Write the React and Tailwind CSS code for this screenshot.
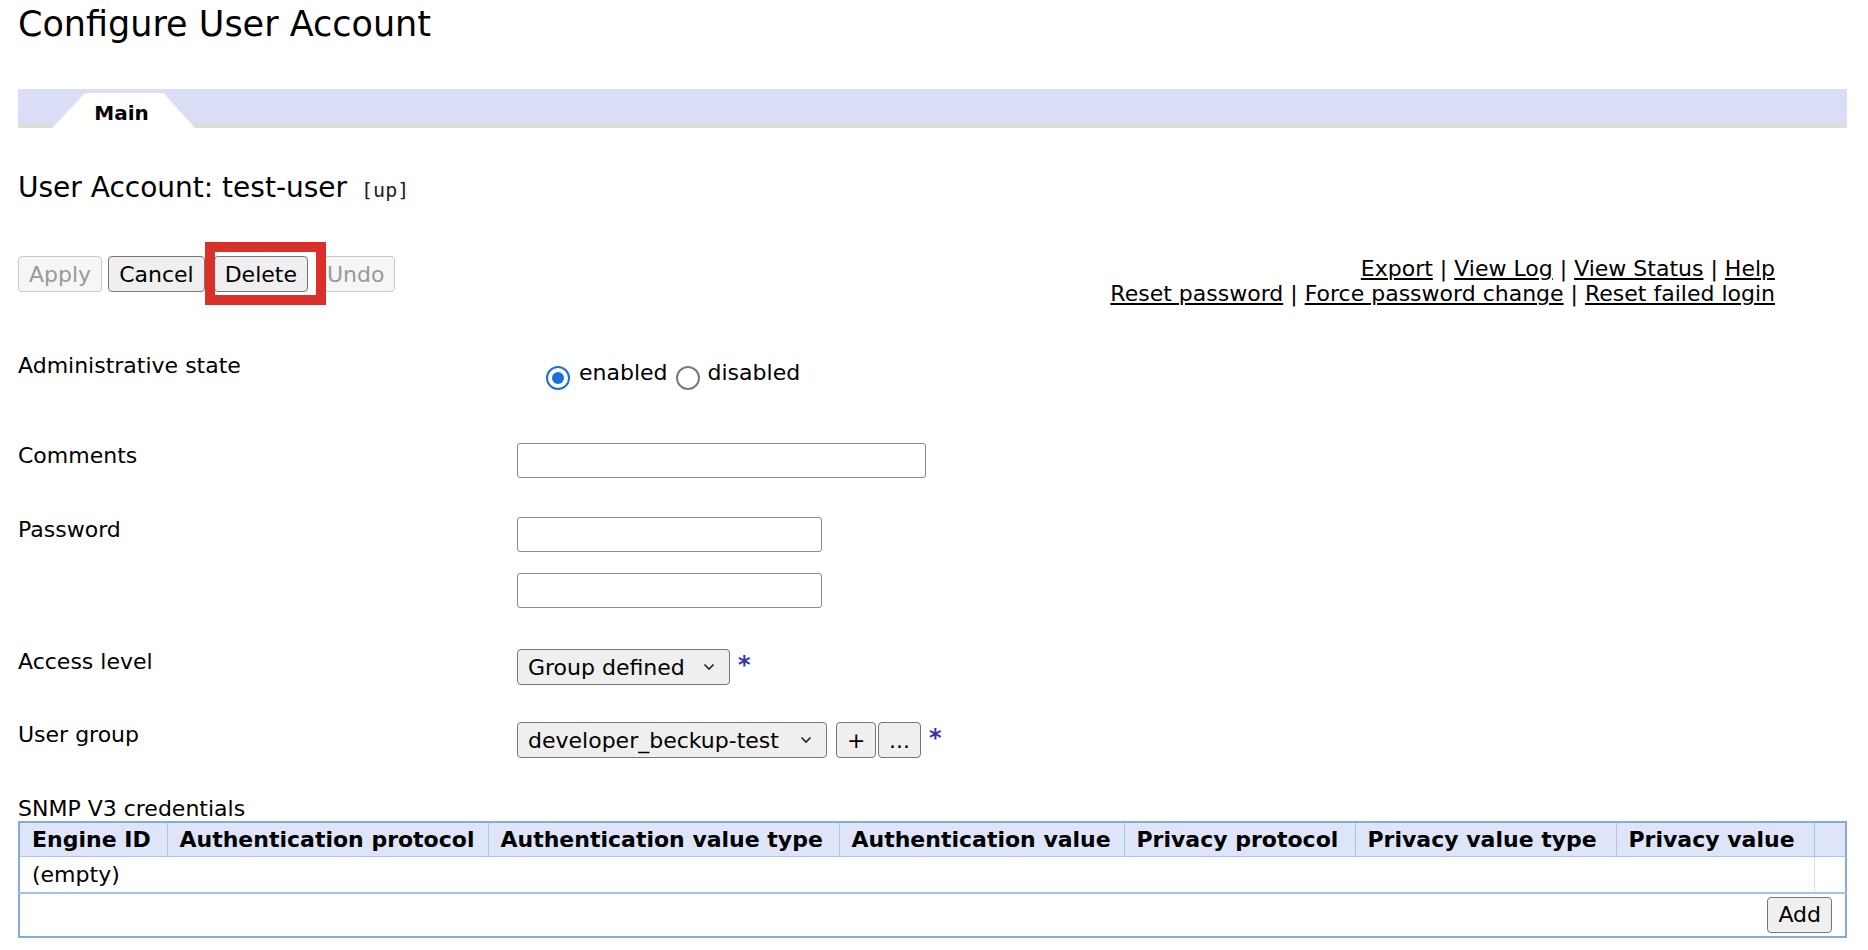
import React from 'react';

const Chevron = () => (
  <svg width="12" height="8" viewBox="0 0 12 8" className="shrink-0">
    <path d="M1.5 1.5 L6 6 L10.5 1.5" fill="none" stroke="#222" strokeWidth="1.6" />
  </svg>
);

const Radio = ({ checked }) =>
  checked ? (
    <span className="mt-[6px] flex h-[24px] w-[24px] shrink-0 items-center justify-center rounded-full border-[2px] border-[#1a6fe0] bg-white">
      <span className="h-[12px] w-[12px] rounded-full bg-[#1a6fe0]" />
    </span>
  ) : (
    <span className="mt-[6px] h-[24px] w-[24px] shrink-0 rounded-full border-[2px] border-[#7a7a7a] bg-white" />
  );

const Button = ({ children, disabled, className = '' }) => (
  <button
    className={
      disabled
        ? `h-[36px] rounded-[4px] border border-[#c9c9c9] bg-[#f6f6f6] px-[10px] text-[#9a9a9a] ${className}`
        : `h-[36px] rounded-[4px] border border-[#767676] bg-[#efefef] px-[10px] text-black ${className}`
    }
  >
    {children}
  </button>
);

const Select = ({ value, width }) => (
  <div
    className={`flex h-[36px] items-center justify-between rounded-[4px] border border-[#767676] bg-[#efefef] pl-[10px] pr-[14px] ${width}`}
  >
    <span>{value}</span>
    <Chevron />
  </div>
);

const Star = () => <span className="ml-[8px] mt-[-4px] text-[24px] font-bold text-[#3434b0]">*</span>;

const FormRow = ({ label, height, children }) => (
  <div className={`flex items-start ${height}`}>
    <div className="w-[499px] shrink-0 leading-[25px]">{label}</div>
    <div className="flex flex-col">{children}</div>
  </div>
);

const columns = [
  { title: 'Engine ID', w: 'w-[148px]' },
  { title: 'Authentication protocol', w: 'w-[321px]' },
  { title: 'Authentication value type', w: 'w-[351px]' },
  { title: 'Authentication value', w: 'w-[285px]' },
  { title: 'Privacy protocol', w: 'w-[231px]' },
  { title: 'Privacy value type', w: 'w-[261px]' },
  { title: 'Privacy value', w: 'w-[198px]' },
];

const App = () => {
  return (
    <div className="min-h-screen bg-white pl-[18px] pr-[21px] font-['DejaVu_Sans',Verdana,sans-serif] text-[22px] text-black">
      {/* Title */}
      <div className="h-[89px] pt-[7px] text-[35px] leading-none">Configure User Account</div>

      {/* Tabs */}
      <div className="flex h-[39px] items-end bg-[linear-gradient(to_bottom,#d9ddf6_34px,#dddddd_34px)]">
        <div className="ml-[34px] flex h-[35px] w-[143px] items-center justify-center bg-white pr-[4px] pt-[4px] text-[20px] font-bold [clip-path:polygon(23%_0,78%_0,100%_100%,0_100%)]">
          Main
        </div>
      </div>

      {/* Object heading */}
      <div className="mt-[43px] flex h-[34px] items-center text-[28px]">
        <span>User Account: test-user</span>
        <span className="ml-[14px] mt-[4px] font-['DejaVu_Sans_Mono',monospace] text-[20px] text-[#222]">[up]</span>
      </div>

      {/* Buttons and links */}
      <div className="mt-[51px] flex h-[50px] items-start justify-between">
        <div className="flex items-center">
          <Button disabled>Apply</Button>
          <Button className="ml-[6px]">Cancel</Button>
          <div className="relative ml-[9px]">
            <Button>Delete</Button>
            <div className="pointer-events-none absolute left-[-9px] right-[-18px] top-[-14px] bottom-[-13px] border-[10px] border-[#d9302a]" />
          </div>
          <Button disabled className="ml-[8px]">Undo</Button>
        </div>
        <div className="mr-[72px] flex flex-col items-end leading-[25px]">
          <div>
            <a className="underline">Export</a> | <a className="underline">View Log</a> |{' '}
            <a className="underline">View Status</a> | <a className="underline">Help</a>
          </div>
          <div>
            <a className="underline">Reset password</a> | <a className="underline">Force password change</a> |{' '}
            <a className="underline">Reset failed login</a>
          </div>
        </div>
      </div>

      {/* Form */}
      <div className="mt-[47px]">
        <FormRow label="Administrative state" height="h-[90px]">
          <div className="ml-[29px] mt-[7px] flex items-start leading-[25px]">
            <Radio checked />
            <span className="ml-[9px]">enabled</span>
            <span className="ml-[8px]" />
            <Radio />
            <span className="ml-[8px]">disabled</span>
          </div>
        </FormRow>

        <FormRow label="Comments" height="h-[74px]">
          <input className="h-[35px] w-[409px] rounded-[3px] border border-[#8a8a8a] bg-white outline-none" />
        </FormRow>

        <FormRow label="Password" height="h-[132px]">
          <input type="password" className="h-[35px] w-[305px] rounded-[3px] border border-[#8a8a8a] bg-white outline-none" />
          <input type="password" className="mt-[21px] h-[35px] w-[305px] rounded-[3px] border border-[#8a8a8a] bg-white outline-none" />
        </FormRow>

        <FormRow label="Access level" height="h-[73px]">
          <div className="flex items-center">
            <Select value="Group defined" width="w-[213px]" />
            <Star />
          </div>
        </FormRow>

        <FormRow label="User group" height="h-[74px]">
          <div className="flex items-center">
            <Select value="developer_beckup-test" width="w-[310px]" />
            <Button className="ml-[9px] w-[40px] px-0">+</Button>
            <Button className="ml-[2px] w-[43px] px-0">...</Button>
            <Star />
          </div>
        </FormRow>
      </div>

      {/* SNMP table */}
      <div className="leading-[25px]">SNMP V3 credentials</div>
      <table className="w-full table-fixed border-collapse border-[2px] border-[#86aadb]">
        <thead>
          <tr className="h-[34px] bg-[#dfe5f8] text-left font-bold">
            {columns.map((c) => (
              <th key={c.title} className={`${c.w} border-b border-r border-[#a9c7ec] px-[12px] font-bold whitespace-nowrap`}>
                {c.title}
              </th>
            ))}
            <th className="border-b border-[#a9c7ec]" />
          </tr>
        </thead>
        <tbody>
          <tr className="h-[36px] border-b-[2px] border-[#a3c0e6]">
            <td colSpan="7" className="px-[12px]">(empty)</td>
            <td className="border-l border-dotted border-[#a9c7ec]" />
          </tr>
          <tr className="h-[44px]">
            <td colSpan="8" className="pr-[13px] text-right">
              <Button className="h-[35px] px-[8px]">Add</Button>
            </td>
          </tr>
        </tbody>
      </table>
    </div>
  );
};

export default App;
